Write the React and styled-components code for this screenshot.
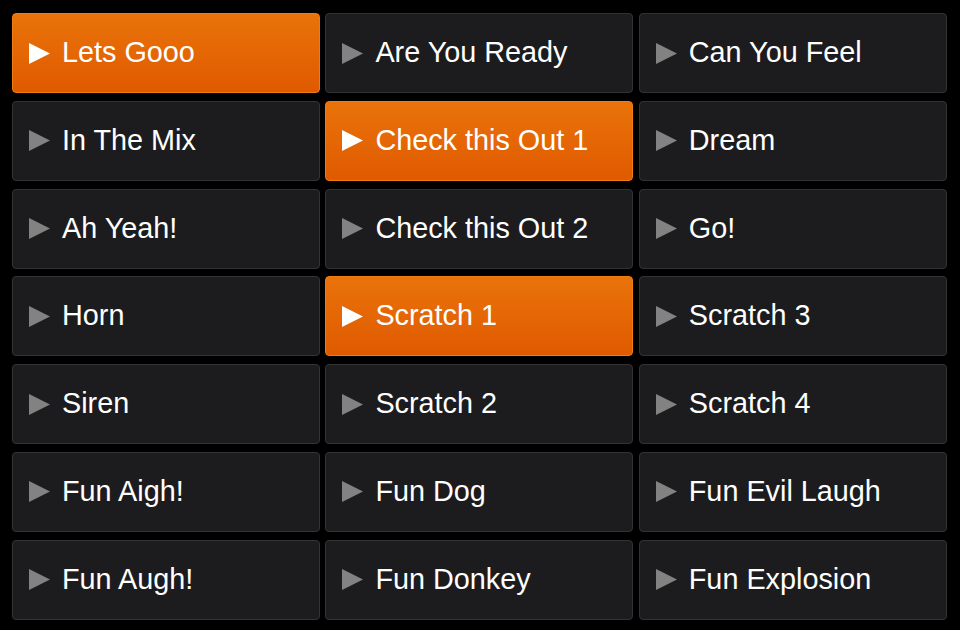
import React from "react";
import styled, { createGlobalStyle, css } from "styled-components";

const Global = createGlobalStyle`
  html, body { margin: 0; padding: 0; background: #000; }
  body { font-family: "Liberation Sans", Arial, sans-serif; }
`;

const Board = styled.div`
  display: grid;
  grid-template-columns: repeat(3, 308px);
  grid-auto-rows: 80px;
  column-gap: 5.4px;
  row-gap: 7.8px;
  padding: 13px 0 0 12px;
  width: 960px;
  height: 630px;
  box-sizing: border-box;
  overflow: hidden;
  background: #000;
`;

const Pad = styled.button`
  display: flex;
  align-items: center;
  gap: 12px;
  box-sizing: border-box;
  margin: 0;
  padding: 0 0 0 16px;
  border-radius: 4px;
  font-family: "Liberation Sans", Arial, sans-serif;
  font-size: 28.8px;
  color: #fff;
  text-align: left;
  cursor: pointer;
  white-space: nowrap;
  ${(p) =>
    p.$active
      ? css`
          background: linear-gradient(#e9730a, #e05a00);
          border: 1px solid #f07c14;
        `
      : css`
          background: #1c1c1e;
          border: 1px solid #333336;
        `}
`;

const Play = styled.svg`
  flex: none;
  width: 21px;
  height: 21px;
  fill: ${(p) => (p.$active ? "#ffffff" : "#828282")};
`;

const Label = styled.span`
  line-height: 1;
  padding-bottom: 1px;
`;

const pads = [
  ["Lets Gooo", true],
  ["Are You Ready"],
  ["Can You Feel"],
  ["In The Mix"],
  ["Check this Out 1", true],
  ["Dream"],
  ["Ah Yeah!"],
  ["Check this Out 2"],
  ["Go!"],
  ["Horn"],
  ["Scratch 1", true],
  ["Scratch 3"],
  ["Siren"],
  ["Scratch 2"],
  ["Scratch 4"],
  ["Fun Aigh!"],
  ["Fun Dog"],
  ["Fun Evil Laugh"],
  ["Fun Augh!"],
  ["Fun Donkey"],
  ["Fun Explosion"],
];

export default function App() {
  return (
    <>
      <Global />
      <Board>
        {pads.map(([name, active]) => (
          <Pad key={name} $active={active}>
            <Play $active={active} viewBox="0 0 21 21">
              <polygon points="0,0 21,10.5 0,21" />
            </Play>
            <Label>{name}</Label>
          </Pad>
        ))}
      </Board>
    </>
  );
}
